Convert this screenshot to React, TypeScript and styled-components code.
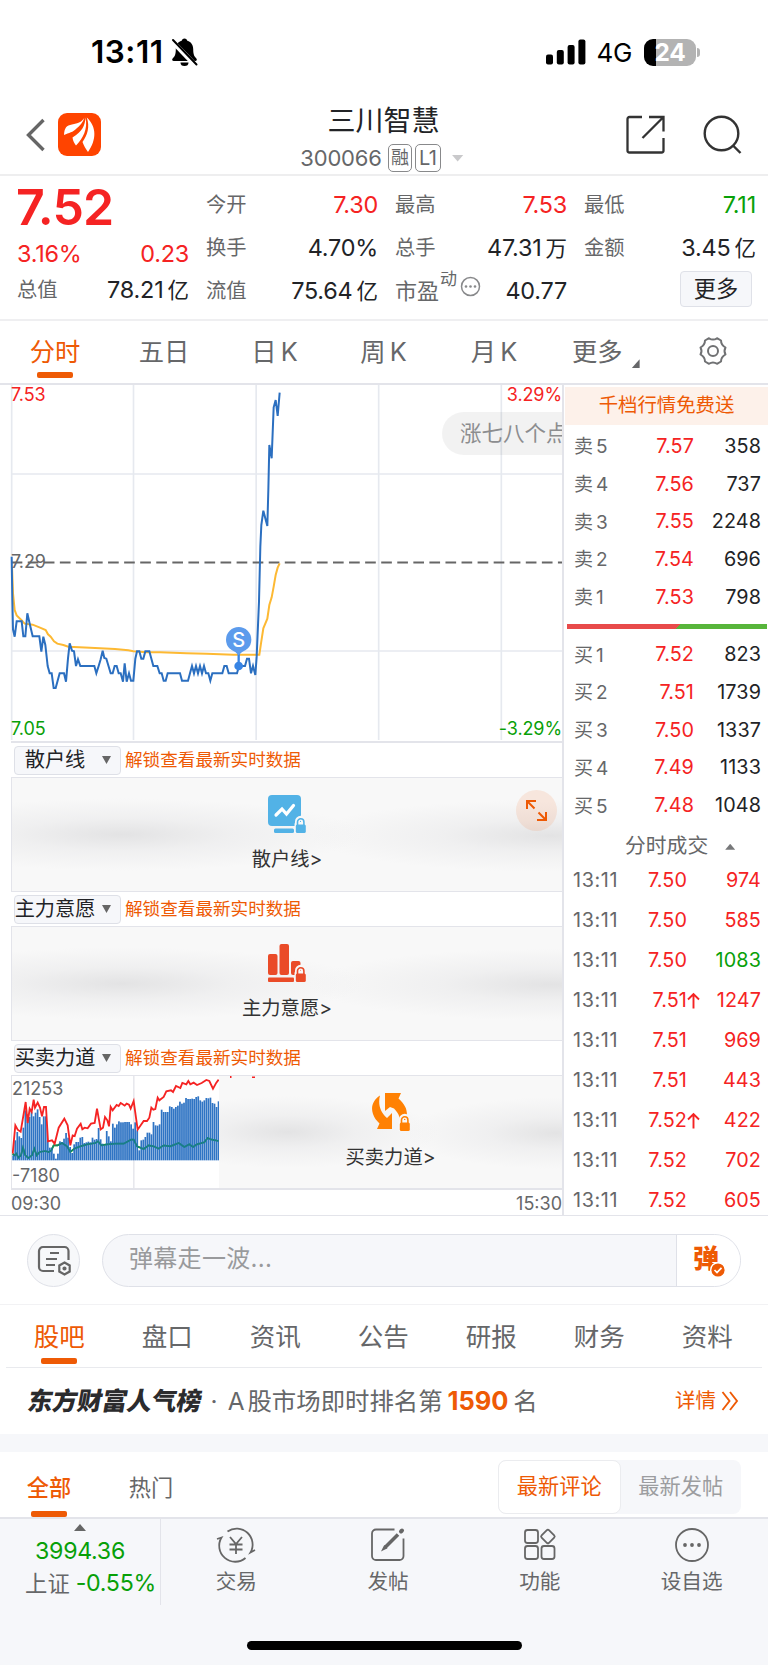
import React from 'react';
import styled, { createGlobalStyle } from 'styled-components';

const RED = '#f52323';
const GREEN = '#08a008';
const ORANGE = '#ee5a05';
const DARK = '#222326';
const GRAY = '#666769';
const LINE = '#e3e4ea';

const GlobalStyle = createGlobalStyle`
* {
    box-sizing: border-box;
}
body {
    margin: 0;
    background: #fff;
    font-family: Inter, 'Noto Sans CJK SC', sans-serif;
    line-height: 1;
    color: ${DARK};
}
svg {
    display: block;
    flex: none;
}
`;

const Page = styled.div`
width: 768px;
height: 1665px;
overflow: hidden;
display: flex;
flex-direction: column;
background: #fff;
white-space: nowrap;
`;

/* status bar */

const StatusBar = styled.div`
height: 104px;
display: flex;
align-items: center;
padding: 0 68px 0 91px;
color: #000;
`;

const Clock = styled.div`
font-size: 31.5px;
font-weight: 600;
letter-spacing: 0.5px;
margin-right: 7px;
`;

const StatusRight = styled.div`
margin-left: auto;
display: flex;
align-items: center;
`;

const Network = styled.div`
font-size: 26px;
margin: 2px 12px 0 11px;
letter-spacing: -0.4px;
`;

const Battery = styled.div`
width: 52px;
height: 27px;
border-radius: 9px;
background: linear-gradient(90deg, #000 24%, #b3b3b3 24%);
color: #fff;
font-size: 24.5px;
font-weight: 700;
display: flex;
align-items: center;
justify-content: center;
letter-spacing: -0.2px;
`;

const BatteryTip = styled.div`
width: 3px;
height: 9px;
margin-left: 1px;
border-radius: 0 3px 3px 0;
background: #b3b3b3;
`;

/* header */

const Header = styled.div`
height: 72px;
display: grid;
grid-template-columns: 1fr 180px 1fr;
border-bottom: 2px solid #eeeeef;
padding: 0 26px;
`;

const HeaderSide = styled.div<{ $right?: boolean }>`
display: flex;
align-items: center;
justify-content: ${({ $right }) => ($right ? 'flex-end' : 'flex-start')};
gap: ${({ $right }) => ($right ? 38 : 13)}px;
height: 61px;
`;

const TitleBlock = styled.div`
display: flex;
flex-direction: column;
align-items: center;
`;

const StockName = styled.div`
font-size: 28px;
line-height: 35px;
padding-right: 1px;
`;

const CodeRow = styled.div`
display: flex;
align-items: center;
height: 28px;
margin-top: 5px;
padding-right: 4px;
font-size: 22px;
color: ${GRAY};
`;

const Code = styled.span`
letter-spacing: -0.2px;
margin-right: 6px;
`;

const Badge = styled.span<{ $wide?: boolean }>`
width: ${({ $wide }) => ($wide ? 26 : 24)}px;
height: 28px;
margin-right: 3px;
border: 1.5px solid #88898b;
border-radius: 5px;
display: flex;
align-items: center;
justify-content: center;
font-size: ${({ $wide }) => ($wide ? 20 : 18)}px;
letter-spacing: -0.5px;
`;

const Triangle = styled.i<{ $w: number; $h: number; $color: string; $up?: boolean }>`
width: ${({ $w }) => $w}px;
height: ${({ $h }) => $h}px;
background: ${({ $color }) => $color};
clip-path: ${({ $up }) => ($up ? 'polygon(50% 0, 100% 100%, 0 100%)' : 'polygon(0 0, 100% 0, 50% 100%)')};
`;

const CodeArrow = styled(Triangle)`
margin-left: 8px;
`;

/* quote */

const Quote = styled.div`
height: 145px;
display: grid;
grid-template-columns: repeat(4, 172px);
column-gap: 17px;
padding-left: 17px;
border-bottom: 2px solid #efeff1;
`;

const QuoteColumn = styled.div`
padding-top: 7px;
`;

const QuoteRow = styled.div<{ $h?: number }>`
height: ${({ $h }) => $h || 43}px;
display: flex;
align-items: center;
justify-content: space-between;
`;

const BigPrice = styled.div`
height: 55px;
margin-left: -1px;
font-size: 50px;
line-height: 49px;
font-weight: 600;
letter-spacing: -0.8px;
color: ${RED};
`;

const QuoteLabel = styled.span`
font-size: 20.3px;
padding-top: 1px;
color: ${GRAY};
`;

const QuoteValue = styled.span<{ $color?: string }>`
font-size: 23.4px;
letter-spacing: -0.2px;
color: ${({ $color }) => $color || DARK};
`;

const Unit = styled.span`
font-size: 21.5px;
letter-spacing: 0;
margin-left: 4px;
`;

const PeLabel = styled.span`
display: flex;
font-size: 22px;
color: ${GRAY};
`;

const Dynamic = styled.span`
font-size: 17px;
margin: -9px 3px 0 1px;
`;

const Ellipsis = styled.svg`
margin-top: -4px;
`;

const MoreButton = styled.div`
width: 72px;
height: 36px;
margin: 2px 4px 0 auto;
border: 1.5px solid #dfe1e8;
border-radius: 4px;
background: #f6f7fa;
display: flex;
align-items: center;
justify-content: center;
font-size: 22.3px;
`;

/* period tabs */

const PeriodTabs = styled.div`
height: 64px;
display: flex;
align-items: center;
border-bottom: 2px solid ${LINE};
color: ${GRAY};
font-size: 25.3px;
`;

const PeriodTab = styled.div<{ $w: number; $active?: boolean }>`
width: ${({ $w }) => $w}px;
height: 100%;
display: flex;
flex-direction: column;
align-items: center;
padding-top: 18px;
word-spacing: -3px;
color: ${({ $active }) => ($active ? ORANGE : GRAY)};
`;

const Underline = styled.i<{ $gap: number }>`
width: 36px;
height: 6px;
border-radius: 2px;
margin-top: ${({ $gap }) => $gap}px;
background: ${ORANGE};
`;

const MoreTab = styled.div`
display: flex;
align-items: flex-end;
gap: 9px;
width: 125px;
padding: 0 0 1px 20px;
`;

const Corner = styled.i`
width: 8px;
height: 9px;
margin-bottom: -4px;
background: ${GRAY};
clip-path: polygon(100% 0, 100% 100%, 0 100%);
`;

const Gear = styled.svg`
margin: 0 0 2px 20px;
`;

/* market area */

const Market = styled.div`
height: 831px;
display: flex;
border-bottom: 1.5px solid ${LINE};
`;

const ChartColumn = styled.div`
width: 564px;
border-right: 2px solid ${LINE};
`;

const PriceChart = styled.div`
position: relative;
height: 358px;
overflow: hidden;

&::after {
    content: '';
    position: absolute;
    left: 11px;
    right: 0;
    bottom: 0;
    height: 2px;
    background: ${LINE};
}
`;

const AxisLabel = styled.div<{ $top: number; $color: string; $right?: boolean }>`
position: absolute;
top: ${({ $top }) => $top}px;
${({ $right }) => ($right ? 'right: 0;' : 'left: 11px;')}
font-size: 18px;
letter-spacing: -0.1px;
color: ${({ $color }) => $color};
`;

const Bullet = styled.div`
position: absolute;
left: 442px;
top: 27px;
width: 140px;
height: 43px;
padding-left: 18px;
border-radius: 22px;
background: rgba(0, 0, 0, 0.05);
font-size: 21.5px;
line-height: 43px;
color: #8c8d8f;
`;

const Section = styled.div`
height: 149px;
padding-left: 11px;
`;

const SectionHead = styled.div`
height: 34px;
display: flex;
align-items: center;
padding-left: 3px;
font-size: 17.6px;
color: ${ORANGE};
`;

const Picker = styled.div`
width: 107px;
height: 29px;
margin-right: 4px;
border: 1.5px solid #dee0e7;
border-radius: 4px;
background: #f6f7fa;
display: flex;
align-items: center;
`;

const PickerText = styled.span`
width: 80px;
margin-right: 7px;
display: flex;
justify-content: center;
font-size: 20.2px;
color: ${DARK};
`;

const PanelRow = styled.div<{ $thick?: boolean }>`
position: relative;
height: 115px;
display: flex;
border: solid ${LINE};
border-width: 1.5px 0 ${({ $thick }) => ($thick ? 2 : 1.5)}px 1.5px;
`;

const LockedPanel = styled.div`
flex: 1;
display: flex;
flex-direction: column;
align-items: center;
padding-top: 17px;
background:
    radial-gradient(ellipse 44% 32% at 20% 50%, #e3e3e4 0%, rgba(236, 236, 237, 0.7) 45%, rgba(248, 248, 248, 0) 100%),
    radial-gradient(ellipse 44% 32% at 98% 51%, #e3e3e4 0%, rgba(236, 236, 237, 0.7) 45%, rgba(248, 248, 248, 0) 100%),
    #f8f8f8;
`;

const LockedLabel = styled.div`
margin-top: 17px;
font-size: 19.3px;
color: #333;
`;

const Expand = styled.div`
position: absolute;
left: 504px;
top: 12px;
width: 41px;
height: 41px;
border-radius: 50%;
background: rgba(250, 110, 30, 0.12);
display: flex;
align-items: center;
justify-content: center;
`;

const ForceScale = styled.div<{ $top: number }>`
position: absolute;
left: 0;
top: ${({ $top }) => $top}px;
font-size: 18px;
color: ${GRAY};
`;

const TimeAxis = styled.div`
display: flex;
justify-content: space-between;
padding: 5px 0 0 11px;
font-size: 18px;
color: ${GRAY};
`;

/* order book */

const Side = styled.div`
width: 204px;
`;

const Promo = styled.div`
height: 38px;
margin: 2px 0 3px 1px;
background: #fdf1ea;
color: ${ORANGE};
display: flex;
align-items: center;
justify-content: center;
font-size: 19.4px;
`;

const BookRow = styled.div`
height: 37.7px;
display: grid;
grid-template-columns: 45px 75px 1fr;
align-items: center;
padding: 0 7px 0 10px;
font-size: 19.8px;
letter-spacing: 0.1px;
`;

const BookLabel = styled.span`
display: flex;
gap: 3px;
font-size: 19px;
color: ${GRAY};
`;

const Num = styled.span<{ $color?: string }>`
text-align: right;
color: ${({ $color }) => $color || DARK};
`;

const RatioBar = styled.div`
height: 5px;
margin: 8px 1px 7px 3px;
background: linear-gradient(135deg, #e84a4a 55.5%, #57b53b 55.5%);
`;

const TradeTitle = styled.div`
height: 27.5px;
display: flex;
align-items: center;
gap: 17px;
padding-left: 61px;
margin-top: 8px;
font-size: 20.8px;
color: ${GRAY};
`;

const TradeRow = styled.div`
height: 40.1px;
display: grid;
grid-template-columns: 56px 58px 13px 1fr;
align-items: center;
padding: 0 7px 0 9px;
font-size: 19.8px;
letter-spacing: 0.1px;
`;

const TradeTime = styled.span`
color: ${GRAY};
letter-spacing: 0.6px;
`;

/* bullet comment input */

const CommentBar = styled.div`
height: 89px;
display: flex;
align-items: center;
gap: 22px;
padding: 1px 27px 0;
border-bottom: 1.5px solid #f2f2f4;
`;

const RoundButton = styled.div`
width: 53px;
height: 53px;
border: 1.5px solid #dfe1e8;
border-radius: 50%;
background: #f7f8fa;
display: flex;
align-items: center;
justify-content: center;
`;

const CommentInput = styled.div`
width: 639px;
height: 53px;
border: 1.5px solid #dfe1e8;
border-radius: 27px;
background: #f6f7fa;
display: flex;
overflow: hidden;
`;

const Placeholder = styled.div`
flex: 1;
padding-left: 26px;
font-size: 24px;
line-height: 48px;
letter-spacing: 0.3px;
color: #999a9c;
`;

const SendButton = styled.div`
position: relative;
width: 64px;
padding: 11px 0 0 16px;
border-left: 1.5px solid #dfe1e8;
background: #fff;
font-size: 26px;
font-weight: 900;
color: ${ORANGE};
`;

const CheckMark = styled.svg`
position: absolute;
left: 33px;
top: 27px;
`;

/* lower tabs */

const InfoTabs = styled.div`
height: 63px;
display: flex;
margin: 0 6px;
border-bottom: 1.5px solid #e9eaee;
`;

const InfoTab = styled.div<{ $active?: boolean }>`
width: 108.2px;
display: flex;
flex-direction: column;
align-items: center;
padding: 19px 1.5px 0 0;
font-size: 25.5px;
color: ${({ $active }) => ($active ? ORANGE : GRAY)};
`;

const RankRow = styled.div`
height: 66px;
display: flex;
align-items: center;
padding: 0 29px 0 26px;
font-size: 24.4px;
color: ${GRAY};
`;

const RankTitle = styled.span`
font-size: 25px;
font-weight: 900;
letter-spacing: -0.2px;
color: #2b2b2d;
transform: skewX(-10deg);
margin: 0 9px 0 2px;
`;

const ShareClass = styled.span`
margin: 0 3px 0 10px;
`;

const Rank = styled.span`
font-size: 25.5px;
font-weight: 700;
letter-spacing: -0.1px;
color: ${ORANGE};
margin: 0 5px;
`;

const Detail = styled.span`
margin-left: auto;
display: flex;
align-items: center;
gap: 5px;
font-size: 20.5px;
color: ${ORANGE};
`;

const Band = styled.div`
height: 18px;
background: #f6f7fa;
`;

const FilterRow = styled.div`
height: 65px;
display: flex;
padding: 0 27px;
`;

const Filter = styled.div<{ $active?: boolean }>`
width: 44px;
margin-right: 58px;
display: flex;
flex-direction: column;
align-items: center;
padding-top: 25px;
font-size: 22.2px;
font-weight: ${({ $active }) => ($active ? 500 : 400)};
color: ${({ $active }) => ($active ? ORANGE : GRAY)};
`;

const Toggle = styled.div`
width: 243px;
height: 54px;
margin: 8px 0 0 auto;
border-radius: 8px;
background: #f6f7fa;
display: flex;
`;

const ToggleItem = styled.div<{ $active?: boolean }>`
flex: 1;
display: flex;
align-items: center;
justify-content: center;
border-radius: 8px;
font-size: 21.2px;
${({ $active }) =>
    $active ? `background: #fff; border: 1.5px solid #ebecef; color: ${ORANGE};` : 'color: #9c9da0;'}
`;

/* bottom bar */

const BottomBar = styled.div`
flex: 1;
border-top: 2px solid ${LINE};
background: #f6f7fa;
display: flex;
flex-direction: column;
align-items: center;
`;

const BottomRow = styled.div`
width: 768px;
height: 86px;
display: flex;
`;

const IndexCell = styled.div`
width: 161px;
border-right: 1.5px solid ${LINE};
display: flex;
flex-direction: column;
align-items: center;
padding-top: 5px;
font-size: 23.2px;
color: ${GREEN};
`;

const IndexRow = styled.div`
display: flex;
align-items: center;
gap: 6px;
margin: 9px 0 0 21px;
letter-spacing: -0.3px;
`;

const IndexName = styled.span`
font-size: 22.3px;
letter-spacing: 0;
color: ${GRAY};
`;

const IndexValue = styled.div`
margin-top: 9px;
letter-spacing: -0.3px;
`;

const Action = styled.div`
flex: 1;
display: flex;
flex-direction: column;
align-items: center;
padding: 8px 1px 0 0;
font-size: 20.6px;
color: ${GRAY};
`;

const ActionLabel = styled.div`
margin-top: 9px;
`;

const HomeBar = styled.div`
width: 275px;
height: 9px;
margin-top: 36px;
border-radius: 5px;
background: #000;
`;

const asks = [
    ['5', '7.57', '358'],
    ['4', '7.56', '737'],
    ['3', '7.55', '2248'],
    ['2', '7.54', '696'],
    ['1', '7.53', '798'],
];

const bids = [
    ['1', '7.52', '823'],
    ['2', '7.51', '1739'],
    ['3', '7.50', '1337'],
    ['4', '7.49', '1133'],
    ['5', '7.48', '1048'],
];

const trades = [
    { price: '7.50', qty: '974' },
    { price: '7.50', qty: '585' },
    { price: '7.50', qty: '1083', sell: true },
    { price: '7.51', qty: '1247', up: true },
    { price: '7.51', qty: '969' },
    { price: '7.51', qty: '443' },
    { price: '7.52', qty: '422', up: true },
    { price: '7.52', qty: '702' },
    { price: '7.52', qty: '605' },
];

const priceLine =
    '35,530 37,660 39,748 44,770 50,724 65,724 70,769 76,769 82,700 90,735 98,769 118,769 124,815 130,770 136,795 143,858 149,880 155,880 161,924 167,924 179,880 192,880 198,905 204,835 209,790 216,812 222,814 228,858 234,838 241,858 283,858 289,880 296,858 302,838 308,812 313,834 319,836 332,880 338,880 344,858 350,858 356,880 362,880 369,905 374,850 380,905 387,880 393,902 400,902 406,836 411,814 418,814 424,836 430,836 436,814 448,814 460,858 472,858 479,880 485,880 491,902 497,902 503,880 540,880 546,902 564,902 570,880 576,858 582,880 588,858 594,880 600,858 606,880 612,858 618,880 625,880 631,902 637,880 667,880 673,858 680,858 686,880 711,880 717,858 735,858 741,836 747,836 753,880 759,858 766,885 770,830 777,665 781,500 784,435 790,392 802,438 805,330 808,195 815,235 821,82 827,60 833,108 839,38';

const averageLine =
    '36,560 39,640 44,690 50,706 64,720 74,731 98,734 120,743 137,750 144,763 152,770 162,784 172,791 190,795 205,800 270,803 345,807 385,811 400,814 440,817 480,817 560,820 620,821 700,824 778,824 783,790 790,745 802,716 808,675 815,652 821,620 827,585 833,563 839,550';

// top edge of every volume bar, 6.1 units apart
const forceBars = [
    345, 300, 275, 288, 293, 262, 210, 222, 230, 215, 228, 217, 207, 230, 252, 228, 228, 300, 322, 322, 340, 355, 340,
    303, 305, 295, 278, 292, 320, 338, 312, 305, 305, 292, 290, 308, 306, 304, 306, 292, 298, 296, 263, 297, 310, 315,
    272, 288, 303, 250, 262, 252, 243, 246, 246, 245, 245, 245, 252, 265, 246, 270, 330, 300, 298, 290, 277, 277, 282,
    245, 255, 256, 252, 208, 215, 215, 215, 198, 200, 205, 200, 196, 184, 190, 187, 173, 176, 176, 175, 176, 170, 168,
    180, 184, 180, 173, 174, 172, 188, 190, 200, 183,
];

const forceRed =
    '37,340 45,255 52,268 61,274 76,185 82,248 88,205 94,215 100,178 104,202 112,187 119,202 125,228 131,200 137,200 143,303 155,300 163,310 175,262 192,235 202,255 210,315 217,285 223,287 230,265 241,250 246,267 253,262 262,264 272,250 283,248 290,205 301,267 308,262 314,230 321,240 326,258 331,200 337,210 349,194 355,197 361,188 367,192 373,196 379,190 386,193 391,205 400,182 412,268 430,242 440,242 447,232 453,202 459,208 465,206 472,172 477,180 490,170 498,153 512,150 518,155 527,137 540,143 546,128 558,132 564,122 570,132 580,127 590,134 604,128 618,119 627,122 638,145 648,127 655,118';

const forceGreen =
    '37,340 42,345 48,340 54,352 62,345 68,322 75,345 84,353 95,345 102,325 109,345 118,335 135,332 145,335 153,330 160,315 172,315 185,308 200,318 210,335 222,325 240,318 260,312 285,308 293,303 303,315 320,312 345,310 370,310 392,298 400,298 410,318 430,326 445,315 460,318 475,325 490,315 510,318 535,308 552,320 567,312 578,320 590,312 612,306 622,293 635,298 655,302';

const Lock: React.FC<{ color: string }> = ({ color }) => (
    <g>
        <path d="M29.500 29v-2.500a3.200 3.200 0 0 1 6.400 0V29" fill="none" stroke="#f8f8f8" strokeWidth="5" />
        <rect x="26.500" y="27" width="12" height="11.500" rx="2" fill="#f8f8f8" />
        <path d="M29.500 30v-3a3.200 3.200 0 0 1 6.400 0v3" fill="none" stroke={color} strokeWidth="1.600" />
        <rect x="27.800" y="29.500" width="10" height="8.500" rx="1.500" fill={color} />
    </g>
);

const RetailIcon = () => (
    <svg width="38" height="38" viewBox="0 0 38 38">
        <rect x="0" y="0" width="33" height="31" rx="4" fill="#52b2e6" />
        <path d="M8 20l6-6 4.500 5 7-8.500" fill="none" stroke="#fff" strokeWidth="3.200" strokeLinecap="round" />
        <rect x="6" y="33.500" width="20" height="4.500" rx="1.500" fill="#52b2e6" />
        <Lock color="#52b2e6" />
    </svg>
);

const IntentIcon = () => (
    <svg width="38" height="38" viewBox="0 0 38 38">
        <g fill="#ea4b28">
            <rect x="0" y="10" width="9.500" height="21" rx="2" />
            <rect x="11.500" y="0" width="9.500" height="31" rx="2" />
            <rect x="23" y="17" width="9.500" height="14" rx="2" />
            <rect x="0" y="33.500" width="26" height="4.500" rx="1" />
        </g>
        <Lock color="#ea4b28" />
    </svg>
);

const ForceIcon = () => (
    <svg width="38" height="38" viewBox="0 0 38 38">
        <g fill="#ff8103">
            <path d="M8 2.500C1 7-1.500 14 1 21c1.300 4 3.500 6.500 6.500 9.500L5 36h15V20l-5 5C7.500 19 6 10 8 2.500z" />
            <path d="M13 0h16l-2.500 5.500c6 5.500 8.500 10 8.500 16.500 0 5-2 9.500-7 12.500 1.500-8-1-14-6-19l-4-1.500-5 4z" />
        </g>
        <Lock color="#ff8103" />
    </svg>
);

const BellOff = () => (
    <svg width="27" height="28" viewBox="0 0 27 28">
        <path d="M13.500 0.500c1.600 0 2.600 1 2.800 2.300 4 1.200 5.900 4.400 5.900 8.200 0 5.500 1 7.300 3 9.300 1.200 1.300.7 2.700-1 2.700H2.800c-1.700 0-2.200-1.400-1-2.700 2-2 3-3.800 3-9.300 0-3.800 1.900-7 5.900-8.200.2-1.300 1.200-2.300 2.800-2.300z" />
        <path d="M9.500 24.500h8a4 3.500 0 0 1-8 0z" />
        <path d="M0 2l25 26" stroke="#fff" strokeWidth="5" />
        <path d="M2 2l23.500 24.500" stroke="#000" strokeWidth="2" strokeLinecap="round" />
    </svg>
);

const PriceSvg = () => (
    <svg width="563" height="355" viewBox="0 15 1689 1065">
        <g stroke="#e6e9ef" strokeWidth="5" fill="none">
            <path d="M35 15V1080M400.500 15V1080M768.500 15V1080M1136 15V1080M1504 15V1080" />
            <path d="M35 282H1689M35 813H1689" />
        </g>
        <path d="M35 547.500H1689" stroke="#666" strokeWidth="5.500" strokeDasharray="32 16.200" />
        <polyline points={averageLine} fill="none" stroke="#fdb933" strokeWidth="6" />
        <polyline points={priceLine} fill="none" stroke="#2b6fc0" strokeWidth="6" strokeLinejoin="miter" />
        <path d="M716 800V858" stroke="#3784e4" strokeWidth="7" />
        <circle cx="716" cy="858" r="13" fill="#3784e4" />
        <path d="M716 826l-14-14h28z" fill="#5c9bec" />
        <circle cx="716" cy="779" r="38" fill="#5c9bec" />
        <text x="716" y="800" textAnchor="middle" fontSize="60" fontWeight="500" fill="#fff">
            S
        </text>
    </svg>
);

const ForceSvg = () => (
    <svg width="207" height="112" viewBox="35 107 621 336">
        <path d="M400.500 107V443" stroke="#e3e4ea" strokeWidth="4" />
        <polyline points={forceGreen} fill="none" stroke="#08a008" strokeWidth="5" />
        {forceBars.map((top, i) => (
            <rect key={i} x={36 + i * 6.1} y={top} width="5.200" height={360 - top} fill="#2f74c4" />
        ))}
        <polyline points={forceGreen} fill="none" stroke="#14807a" strokeWidth="5" opacity="0.75" />
        <polyline points={forceRed} fill="none" stroke="#f52323" strokeWidth="5.500" />
    </svg>
);

// tail of the red curve that sticks out above the locked panel
const Spill = styled.svg`
position: absolute;
left: 217px;
top: -1px;
`;

const Head: React.FC<{ name: string }> = ({ name }) => (
    <SectionHead>
        <Picker>
            <PickerText>{name}</PickerText>
            <Triangle $w={9} $h={8} $color="#666" />
        </Picker>
        解锁查看最新实时数据
    </SectionHead>
);

const App: React.FC = () => {
    return (
        <Page>
            <GlobalStyle />
            <StatusBar>
                <Clock>13:11</Clock>
                <BellOff />
                <StatusRight>
                    <svg width="40" height="26" viewBox="0 0 40 26">
                        <rect x="0" y="15.500" width="7" height="10" rx="2" />
                        <rect x="10.800" y="11" width="7" height="14.500" rx="2" />
                        <rect x="21.600" y="6" width="7" height="19.500" rx="2" />
                        <rect x="32.400" y="0.500" width="7" height="25" rx="2" />
                    </svg>
                    <Network>4G</Network>
                    <Battery>24</Battery>
                    <BatteryTip />
                </StatusRight>
            </StatusBar>

            <Header>
                <HeaderSide>
                    <svg width="19" height="34" viewBox="0 0 19 34">
                        <path d="M17.500 2L2.500 17l15 15" fill="none" stroke="#666" strokeWidth="3.400" />
                    </svg>
                    <svg width="43" height="43" viewBox="0 0 43 43">
                        <rect width="43" height="43" rx="9" fill="#ff4400" />
                        <g fill="#fff">
                            <path d="M26.500 4.500C24 9 20 10.500 14 11.500 8.500 12.500 6.500 14.500 6 22c5-2.500 9-2.500 12.500-6.500C21.500 13 25 9.500 26.500 4.500z" />
                            <path d="M27.500 4.500C27 13 24 18.500 14.500 24.500c.5 3.500 1.800 5.500 3.500 8C25 25.500 30 16 27.500 4.500z" />
                            <path d="M28.800 4.500C32 14 29.500 22 24.500 29c1.500 4 3 6.500 5.500 10C38.500 27 39 14 28.800 4.500z" />
                        </g>
                    </svg>
                </HeaderSide>
                <TitleBlock>
                    <StockName>三川智慧</StockName>
                    <CodeRow>
                        <Code>300066</Code>
                        <Badge>融</Badge>
                        <Badge $wide>L1</Badge>
                        <CodeArrow $w={12} $h={7} $color="#c9c9cb" />
                    </CodeRow>
                </TitleBlock>
                <HeaderSide $right>
                    <svg width="39" height="39" viewBox="0 0 39 39" fill="none" stroke="#333" strokeWidth="2.300">
                        <path d="M16 2H3.500a2 2 0 0 0-2 2v31.500a2 2 0 0 0 2 2H35.500a2 2 0 0 0 2-2V23" />
                        <path d="M23 2h14.500v14.500M37 2.500L16.500 23" />
                    </svg>
                    <svg width="39" height="39" viewBox="0 0 39 39" fill="none" stroke="#333" strokeWidth="2.400">
                        <circle cx="18.500" cy="18.500" r="16.800" />
                        <path d="M30 30.500l7.500 7.500" />
                    </svg>
                </HeaderSide>
            </Header>

            <Quote>
                <QuoteColumn>
                    <BigPrice>7.52</BigPrice>
                    <QuoteRow $h={32}>
                        <QuoteValue $color={RED}>3.16%</QuoteValue>
                        <QuoteValue $color={RED}>0.23</QuoteValue>
                    </QuoteRow>
                    <QuoteRow $h={40}>
                        <QuoteLabel>总值</QuoteLabel>
                        <QuoteValue>
                            78.21<Unit>亿</Unit>
                        </QuoteValue>
                    </QuoteRow>
                </QuoteColumn>
                <QuoteColumn>
                    <QuoteRow>
                        <QuoteLabel>今开</QuoteLabel>
                        <QuoteValue $color={RED}>7.30</QuoteValue>
                    </QuoteRow>
                    <QuoteRow>
                        <QuoteLabel>换手</QuoteLabel>
                        <QuoteValue>4.70%</QuoteValue>
                    </QuoteRow>
                    <QuoteRow>
                        <QuoteLabel>流值</QuoteLabel>
                        <QuoteValue>
                            75.64<Unit>亿</Unit>
                        </QuoteValue>
                    </QuoteRow>
                </QuoteColumn>
                <QuoteColumn>
                    <QuoteRow>
                        <QuoteLabel>最高</QuoteLabel>
                        <QuoteValue $color={RED}>7.53</QuoteValue>
                    </QuoteRow>
                    <QuoteRow>
                        <QuoteLabel>总手</QuoteLabel>
                        <QuoteValue>
                            47.31<Unit>万</Unit>
                        </QuoteValue>
                    </QuoteRow>
                    <QuoteRow>
                        <PeLabel>
                            市盈
                            <Dynamic>动</Dynamic>
                            <Ellipsis width="21" height="21" viewBox="0 0 21 21">
                                <circle cx="10.500" cy="10.500" r="9" fill="none" stroke="#88898b" strokeWidth="1.500" />
                                <g fill="#88898b">
                                    <circle cx="6" cy="10.500" r="1.300" />
                                    <circle cx="10.500" cy="10.500" r="1.300" />
                                    <circle cx="15" cy="10.500" r="1.300" />
                                </g>
                            </Ellipsis>
                        </PeLabel>
                        <QuoteValue>40.77</QuoteValue>
                    </QuoteRow>
                </QuoteColumn>
                <QuoteColumn>
                    <QuoteRow>
                        <QuoteLabel>最低</QuoteLabel>
                        <QuoteValue $color={GREEN}>7.11</QuoteValue>
                    </QuoteRow>
                    <QuoteRow>
                        <QuoteLabel>金额</QuoteLabel>
                        <QuoteValue>
                            3.45<Unit>亿</Unit>
                        </QuoteValue>
                    </QuoteRow>
                    <MoreButton>更多</MoreButton>
                </QuoteColumn>
            </Quote>

            <PeriodTabs>
                <PeriodTab $w={110} $active>
                    分时
                    <Underline $gap={8} />
                </PeriodTab>
                <PeriodTab $w={108}>五日</PeriodTab>
                <PeriodTab $w={113}>日 K</PeriodTab>
                <PeriodTab $w={105}>周 K</PeriodTab>
                <PeriodTab $w={116}>月 K</PeriodTab>
                <MoreTab>
                    更多
                    <Corner />
                </MoreTab>
                <Gear
                    width="32"
                    height="30"
                    viewBox="0 0 32 30"
                    fill="none"
                    stroke="#707173"
                    strokeWidth="2"
                    strokeLinejoin="round"
                >
                    <path d="M12 2.200Q16 5 20 2.200L24 4.500Q24 9 28.500 11.500Q26.500 15 28.500 18.500Q24 21 24 25.500L20 27.800Q16 25 12 27.800L8 25.500Q8 21 3.500 18.500Q5.500 15 3.500 11.500Q8 9 8 4.500z" />
                    <circle cx="16" cy="15" r="5" />
                </Gear>
            </PeriodTabs>

            <Market>
                <ChartColumn>
                    <PriceChart>
                        <PriceSvg />
                        <AxisLabel $top={1} $color={RED}>7.53</AxisLabel>
                        <AxisLabel $top={168} $color={GRAY}>7.29</AxisLabel>
                        <AxisLabel $top={335} $color={GREEN}>7.05</AxisLabel>
                        <AxisLabel $top={1} $color={RED} $right>3.29%</AxisLabel>
                        <AxisLabel $top={335} $color={GREEN} $right>-3.29%</AxisLabel>
                        <Bullet>涨七八个点</Bullet>
                    </PriceChart>
                    <Section>
                        <Head name="散户线" />
                        <PanelRow>
                            <LockedPanel>
                                <RetailIcon />
                                <LockedLabel>散户线&gt;</LockedLabel>
                            </LockedPanel>
                            <Expand>
                                <svg width="21" height="21" viewBox="0 0 21 21" fill="none" stroke={ORANGE} strokeWidth="2">
                                    <path d="M1 9V1h9M1.500 1.500l7 7M20 12v8h-9M19.500 19.500l-7-7" />
                                </svg>
                            </Expand>
                        </PanelRow>
                    </Section>
                    <Section>
                        <Head name="主力意愿" />
                        <PanelRow>
                            <LockedPanel>
                                <IntentIcon />
                                <LockedLabel>主力意愿&gt;</LockedLabel>
                            </LockedPanel>
                        </PanelRow>
                    </Section>
                    <Section>
                        <Head name="买卖力道" />
                        <PanelRow $thick>
                            <ForceSvg />
                            <ForceScale $top={4}>21253</ForceScale>
                            <ForceScale $top={91}>-7180</ForceScale>
                            <LockedPanel>
                                <ForceIcon />
                                <LockedLabel>买卖力道&gt;</LockedLabel>
                            </LockedPanel>
                            <Spill width="28" height="4" viewBox="0 0 28 4" fill={RED}>
                                <rect x="1" y="1" width="1.500" height="2" />
                                <rect x="23" y="1.500" width="3" height="1.500" />
                            </Spill>
                        </PanelRow>
                    </Section>
                    <TimeAxis>
                        <span>09:30</span>
                        <span>15:30</span>
                    </TimeAxis>
                </ChartColumn>
                <Side>
                    <Promo>千档行情免费送</Promo>
                    {asks.map(([n, price, qty]) => (
                        <BookRow key={n}>
                            <BookLabel>
                                卖<span>{n}</span>
                            </BookLabel>
                            <Num $color={RED}>{price}</Num>
                            <Num>{qty}</Num>
                        </BookRow>
                    ))}
                    <RatioBar />
                    {bids.map(([n, price, qty]) => (
                        <BookRow key={n}>
                            <BookLabel>
                                买<span>{n}</span>
                            </BookLabel>
                            <Num $color={RED}>{price}</Num>
                            <Num>{qty}</Num>
                        </BookRow>
                    ))}
                    <TradeTitle>
                        分时成交
                        <Triangle $w={10} $h={6} $color="#77787a" $up />
                    </TradeTitle>
                    {trades.map((t, i) => (
                        <TradeRow key={i}>
                            <TradeTime>13:11</TradeTime>
                            <Num $color={RED}>{t.price}</Num>
                            <svg width="13" height="18" viewBox="0 0 13 18" fill="none" stroke={RED} strokeWidth="1.900">
                                {t.up && <path d="M6.500 16.500V2M1 7.500L6.500 2l5.500 5.500" />}
                            </svg>
                            <Num $color={t.sell ? GREEN : RED}>{t.qty}</Num>
                        </TradeRow>
                    ))}
                </Side>
            </Market>

            <CommentBar>
                <RoundButton>
                    <svg width="34" height="32" viewBox="0 0 34 32" fill="none" stroke="#666" strokeWidth="2.200">
                        <path d="M17 26H6a4 4 0 0 1-4-4V6a4 4 0 0 1 4-4h21.500a4 4 0 0 1 4 4v9" />
                        <path d="M13 8h9M9 14h11M9 20h9" />
                        <path d="M27.500 17.500l5.200 3v6l-5.200 3-5.200-3v-6z" />
                        <circle cx="27.500" cy="23.500" r="1" />
                    </svg>
                </RoundButton>
                <CommentInput>
                    <Placeholder>弹幕走一波...</Placeholder>
                    <SendButton>
                        弹
                        <CheckMark width="16" height="16" viewBox="0 0 16 16">
                            <circle cx="8" cy="8" r="7.300" fill={ORANGE} stroke="#fff" strokeWidth="1.400" />
                            <path d="M4.500 8l2.500 2.500 4.500-4.700" fill="none" stroke="#fff" strokeWidth="1.700" />
                        </CheckMark>
                    </SendButton>
                </CommentInput>
            </CommentBar>

            <InfoTabs>
                <InfoTab $active>
                    股吧
                    <Underline $gap={8} />
                </InfoTab>
                <InfoTab>盘口</InfoTab>
                <InfoTab>资讯</InfoTab>
                <InfoTab>公告</InfoTab>
                <InfoTab>研报</InfoTab>
                <InfoTab>财务</InfoTab>
                <InfoTab>资料</InfoTab>
            </InfoTabs>

            <RankRow>
                <RankTitle>东方财富人气榜</RankTitle>
                <span>·</span>
                <ShareClass>A</ShareClass>
                <span>股市场即时排名第</span>
                <Rank>1590</Rank>
                名
                <Detail>
                    详情
                    <svg width="18" height="20" viewBox="0 0 18 20" fill="none" stroke={ORANGE} strokeWidth="1.900">
                        <path d="M1.500 1l7 9-7 9M9 1l7 9-7 9" />
                    </svg>
                </Detail>
            </RankRow>
            <Band />

            <FilterRow>
                <Filter $active>
                    全部
                    <Underline $gap={12} />
                </Filter>
                <Filter>热门</Filter>
                <Toggle>
                    <ToggleItem $active>最新评论</ToggleItem>
                    <ToggleItem>最新发帖</ToggleItem>
                </Toggle>
            </FilterRow>

            <BottomBar>
                <BottomRow>
                    <IndexCell>
                        <Triangle $w={12} $h={7} $color="#666" $up />
                        <IndexValue>3994.36</IndexValue>
                        <IndexRow>
                            <IndexName>上证</IndexName>-0.55%
                        </IndexRow>
                    </IndexCell>
                    <Action>
                        <svg width="40" height="36" viewBox="0 0 40 36" fill="none" stroke="#666" strokeWidth="1.800">
                            <path d="M11.500 4.400A16 16 0 0 1 34.500 25.500l4.500-2.500" />
                            <path d="M29.500 31A16 16 0 0 1 5.500 10.500L1 12" />
                            <path d="M14 10l6 7 6-7M20 17v10M13.500 17.500h13M13.500 22.500h13" />
                        </svg>
                        <ActionLabel>交易</ActionLabel>
                    </Action>
                    <Action>
                        <svg width="34" height="36" viewBox="0 0 34 36" fill="none" stroke="#666" strokeWidth="1.800">
                            <path d="M23.500 2.500H5a4 4 0 0 0-4 4V29a4 4 0 0 0 4 4h23.500a4 4 0 0 0 4-4V11.500" />
                            <path d="M14 20.500L27 7.500" strokeWidth="3.600" />
                            <path d="M12 22.500l1.500-3 1.500 1.500z" fill="#666" />
                            <path d="M30 4.500l1-1" strokeWidth="4" strokeLinecap="round" />
                        </svg>
                        <ActionLabel>发帖</ActionLabel>
                    </Action>
                    <Action>
                        <svg width="34" height="36" viewBox="0 0 34 36" fill="none" stroke="#666" strokeWidth="1.800">
                            <rect x="2" y="3" width="13" height="13" rx="2.500" />
                            <rect x="2" y="19" width="13" height="13" rx="2.500" />
                            <rect x="18.500" y="19" width="13" height="13" rx="2.500" />
                            <rect x="19.700" y="4.300" width="10.400" height="10.400" rx="1.500" transform="rotate(45 24.900 9.500)" />
                        </svg>
                        <ActionLabel>功能</ActionLabel>
                    </Action>
                    <Action>
                        <svg width="34" height="36" viewBox="0 0 34 36">
                            <circle cx="17" cy="18" r="16" fill="none" stroke="#666" strokeWidth="1.800" />
                            <g fill="#666">
                                <circle cx="10" cy="18" r="1.900" />
                                <circle cx="17" cy="18" r="1.900" />
                                <circle cx="24" cy="18" r="1.900" />
                            </g>
                        </svg>
                        <ActionLabel>设自选</ActionLabel>
                    </Action>
                </BottomRow>
                <HomeBar />
            </BottomBar>
        </Page>
    );
};

export default App;
